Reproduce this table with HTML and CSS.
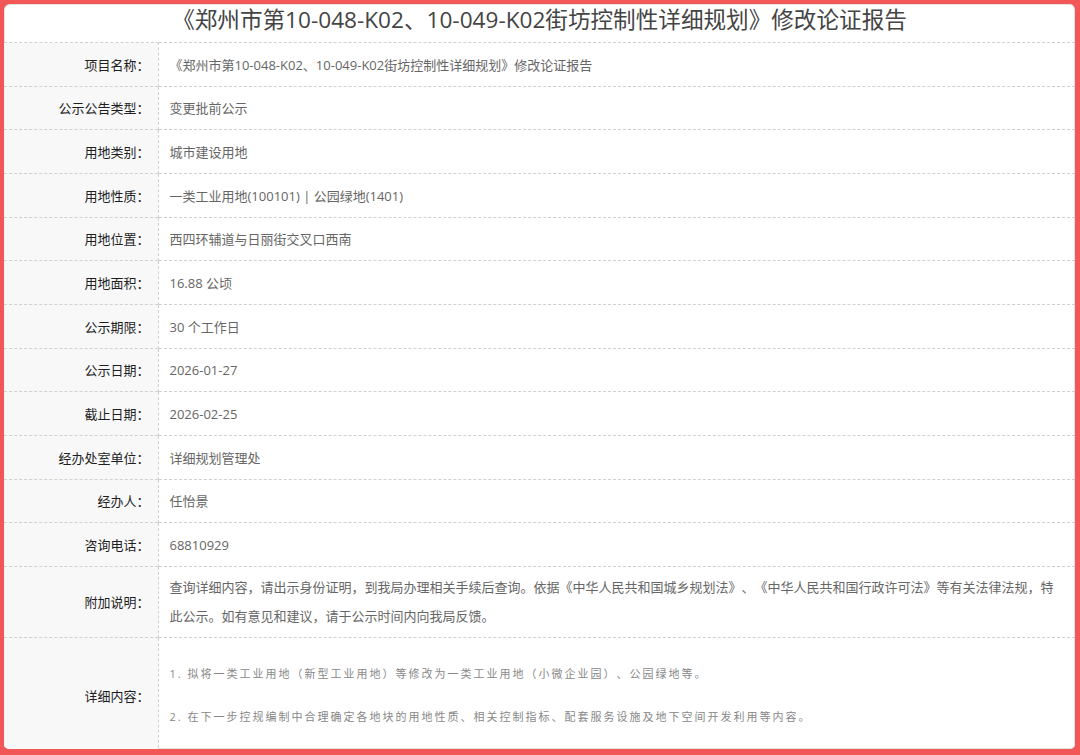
FILE: index.html
```html
<!DOCTYPE html>
<html lang="zh-CN">
<head>
    <meta charset="UTF-8">
    <title>修改论证报告公示</title>
    <link rel="stylesheet" href="styles.css">
</head>
<body>
    <div class="frame">
        <h1 class="title">《郑州市第10-048-K02、10-049-K02街坊控制性详细规划》修改论证报告</h1>
        <table class="info">
            <tr><th>项目名称：</th><td>《郑州市第10-048-K02、10-049-K02街坊控制性详细规划》修改论证报告</td></tr>
            <tr><th>公示公告类型：</th><td>变更批前公示</td></tr>
            <tr><th>用地类别：</th><td>城市建设用地</td></tr>
            <tr><th>用地性质：</th><td>一类工业用地(100101) | 公园绿地(1401)</td></tr>
            <tr><th>用地位置：</th><td>西四环辅道与日丽街交叉口西南</td></tr>
            <tr><th>用地面积：</th><td>16.88 公顷</td></tr>
            <tr><th>公示期限：</th><td>30 个工作日</td></tr>
            <tr><th>公示日期：</th><td>2026-01-27</td></tr>
            <tr><th>截止日期：</th><td>2026-02-25</td></tr>
            <tr><th>经办处室单位：</th><td>详细规划管理处</td></tr>
            <tr><th>经办人：</th><td>任怡景</td></tr>
            <tr><th>咨询电话：</th><td>68810929</td></tr>
            <tr class="note">
                <th>附加说明：</th>
                <td>查询详细内容，请出示身份证明，到我局办理相关手续后查询。依据《中华人民共和国城乡规划法》、《中华人民共和国行政许可法》等有关法律法规，特此公示。如有意见和建议，请于公示时间内向我局反馈。</td>
            </tr>
            <tr class="detail">
                <th>详细内容：</th>
                <td>
                    <p>1. 拟将一类工业用地（新型工业用地）等修改为一类工业用地（小微企业园）、公园绿地等。</p>
                    <p>2. 在下一步控规编制中合理确定各地块的用地性质、相关控制指标、配套服务设施及地下空间开发利用等内容。</p>
                </td>
            </tr>
        </table>
    </div>
</body>
</html>
```

FILE: styles.css
```css
html, body { margin: 0; padding: 0; background: #f25757; }
body {
    font-family: "Open Sans", "Noto Sans CJK SC", "Noto Sans", sans-serif;
    color: #333;
    text-spacing-trim: space-all;
}

.frame {
    box-sizing: border-box;
    width: 1080px;
    height: 755px;
    border-style: solid;
    border-color: #f25757;
    border-width: 4px 5px 6px 4px;
    border-radius: 10px;
    background: #fff;
    overflow: hidden;
    box-shadow: inset 0 0 0 1px #e4e4e4;
}

.title {
    margin: 0;
    height: 38px;
    line-height: 32px;
    font-size: 22.6px;
    font-weight: normal;
    color: #444;
    text-align: center;
}

.info { width: 100%; border-collapse: collapse; font-size: 13px; }
.info th, .info td {
    border-top: 1px dashed #d0d0d0;
    height: 43.67px;
    padding: 0;
    box-sizing: border-box;
}
.info th {
    width: 154px;
    padding-right: 8px;
    text-align: right;
    font-weight: normal;
    color: #1e1e1e;
    background: #f8f8f9;
    border-right: 1px dashed #d0d0d0;
}
.info td { padding-left: 11px; padding-right: 10px; color: #666; }

.note td { height: 71px; line-height: 29px; padding-top: 6px; padding-bottom: 6px; }

.detail td { height: 113px; padding-top: 25px; padding-bottom: 25px; }
.detail p {
    margin: 0;
    line-height: 22px;
    font-size: 11px;
    letter-spacing: 2px;
    color: #888;
}
.detail p + p { margin-top: 21px; }
```
